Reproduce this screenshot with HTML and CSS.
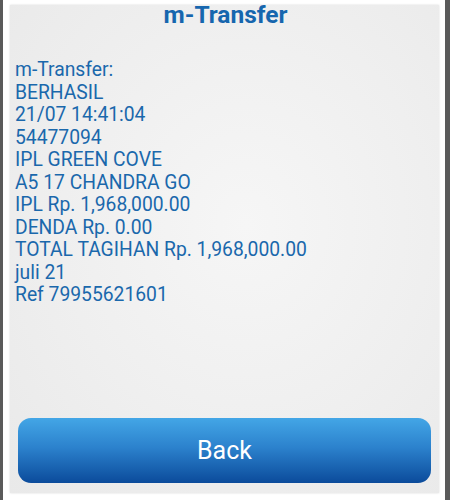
FILE: index.html
```html
<!DOCTYPE html>
<html>
<head>
<meta charset="utf-8">
<link rel="stylesheet" href="styles.css">
</head>
<body>
<div class="screen">
  <div class="frame">
    <div class="panel">
      <h1 class="title">m-Transfer</h1>
      <div class="message">
        <div class="line">m-Transfer:</div>
        <div class="line">BERHASIL</div>
        <div class="line">21/07 14:41:04</div>
        <div class="line">54477094</div>
        <div class="line">IPL GREEN COVE</div>
        <div class="line">A5 17 CHANDRA GO</div>
        <div class="line">IPL Rp. 1,968,000.00</div>
        <div class="line">DENDA Rp. 0.00</div>
        <div class="line">TOTAL TAGIHAN Rp. 1,968,000.00</div>
        <div class="line">juli 21</div>
        <div class="line">Ref 79955621601</div>
      </div>
      <div class="spacer"></div>
      <button class="back">Back</button>
    </div>
  </div>
</div>
</body>
</html>
```
FILE: styles.css
```css
html, body {
  margin: 0;
  padding: 0;
  width: 450px;
  height: 500px;
  overflow: hidden;
  font-family: Roboto, "Noto Sans", sans-serif;
}
.screen {
  width: 450px;
  height: 500px;
  box-sizing: border-box;
  background: #5a5a5a;
  padding: 0 5px 0 3px;
}
.frame {
  height: 100%;
  background: #ffffff;
  box-sizing: border-box;
  padding: 5px 6px 7px 7px;
}
.panel {
  height: 100%;
  box-sizing: border-box;
  background: radial-gradient(ellipse at 55% 45%, #f6f6f6 0%, #efefef 55%, #e9e9e9 100%);
  box-shadow: 0 0 2px rgba(0,0,0,0.15);
  display: flex;
  flex-direction: column;
  padding: 0 8px 10px 5px;
}
.title {
  margin: 0;
  text-align: center;
  font-size: 24.5px;
  font-weight: bold;
  color: #1666ae;
  line-height: 20px;
  padding-left: 5px;
}
.message {
  margin-top: 34px;
  color: #1a68ac;
  font-size: 19.3px;
  line-height: 22.5px;
}
.spacer { flex: 1; }
.back {
  height: 65px;
  margin: 0 0 0 3px;
  border: none;
  border-radius: 13px;
  background: linear-gradient(to bottom, #43a6e6 0%, #2c82cd 45%, #0b4b9b 100%);
  color: #ffffff;
  font-family: Roboto, "Noto Sans", sans-serif;
  font-size: 25px;
  padding: 0;
}
```
